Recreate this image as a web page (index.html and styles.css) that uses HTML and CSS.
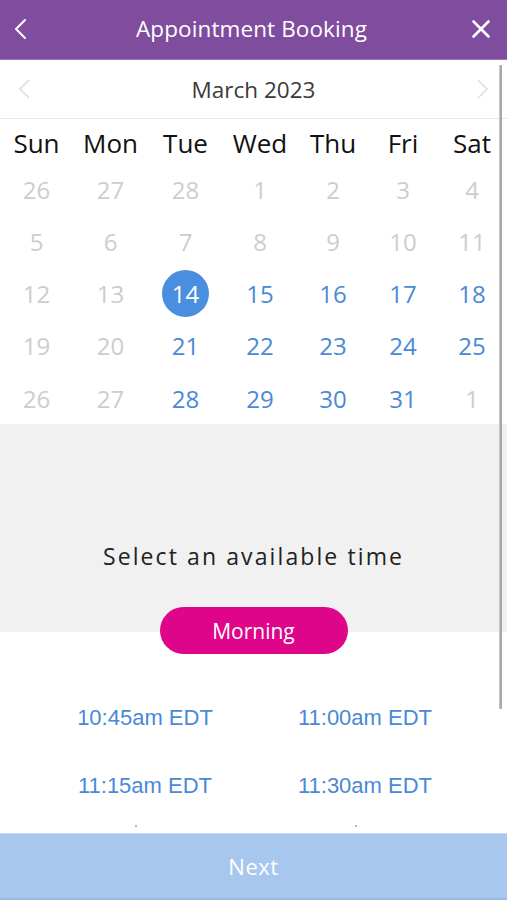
FILE: index.html
```html
<!DOCTYPE html>
<html lang="en">
<head>
<meta charset="utf-8">
<title>Appointment Booking</title>
<link rel="stylesheet" href="styles.css">
</head>
<body>
<div class="app">
  <header class="topbar">
    <button class="icon-btn back" aria-label="Back">
      <svg width="20" height="24" viewBox="0 0 20 24"><polyline points="13,3 4,12 13,21" fill="none" stroke="#fff" stroke-width="2" stroke-linecap="round" stroke-linejoin="round"/></svg>
    </button>
    <h1 class="title">Appointment Booking</h1>
    <button class="icon-btn close" aria-label="Close">
      <svg width="20" height="20" viewBox="0 0 20 20"><path d="M2.5 2.5 L17.5 17.5 M17.5 2.5 L2.5 17.5" fill="none" stroke="#fff" stroke-width="2.6" stroke-linecap="round"/></svg>
    </button>
  </header>

  <main class="content">
    <div class="month-row">
      <span class="chev">
        <svg width="14" height="22" viewBox="0 0 14 22"><polyline points="11,2 2,11 11,20" fill="none" stroke="#dcdcdc" stroke-width="1.5"/></svg>
      </span>
      <span class="month">March 2023</span>
      <span class="chev">
        <svg width="14" height="22" viewBox="0 0 14 22"><polyline points="3,2 12,11 3,20" fill="none" stroke="#dcdcdc" stroke-width="1.5"/></svg>
      </span>
    </div>

    <div class="calendar">
      <div class="wd">Sun</div><div class="wd">Mon</div><div class="wd">Tue</div><div class="wd">Wed</div><div class="wd">Thu</div><div class="wd">Fri</div><div class="wd">Sat</div>

      <div class="d off">26</div><div class="d off">27</div><div class="d off">28</div><div class="d off">1</div><div class="d off">2</div><div class="d off">3</div><div class="d off">4</div>
      <div class="d off">5</div><div class="d off">6</div><div class="d off">7</div><div class="d off">8</div><div class="d off">9</div><div class="d off">10</div><div class="d off">11</div>
      <div class="d off">12</div><div class="d off">13</div><div class="d sel"><span>14</span></div><div class="d on">15</div><div class="d on">16</div><div class="d on">17</div><div class="d on">18</div>
      <div class="d off">19</div><div class="d off">20</div><div class="d on">21</div><div class="d on">22</div><div class="d on">23</div><div class="d on">24</div><div class="d on">25</div>
      <div class="d off">26</div><div class="d off">27</div><div class="d on">28</div><div class="d on">29</div><div class="d on">30</div><div class="d on">31</div><div class="d off">1</div>
    </div>

    <section class="times-panel">
      <p class="prompt">Select an available time</p>
      <button class="period">Morning</button>
      <div class="slots">
        <span class="slot">10:45am EDT</span>
        <span class="slot">11:00am EDT</span>
        <span class="slot">11:15am EDT</span>
        <span class="slot">11:30am EDT</span>
      </div>
      <div class="peek">
        <span class="dot"></span>
        <span class="dot"></span>
      </div>
    </section>

    <div class="scrollbar"></div>
  </main>

  <footer class="footer">
    <button class="next">Next</button>
  </footer>
</div>
</body>
</html>
```

FILE: styles.css
```css
* { box-sizing: border-box; }

html, body {
  margin: 0;
  padding: 0;
  background: #fff;
}

body {
  font-family: "Open Sans", "Noto Sans", sans-serif;
}

.app {
  width: 507px;
  height: 900px;
  display: flex;
  flex-direction: column;
  overflow: hidden;
}

.topbar {
  flex: 0 0 60px;
  height: 60px;
  background: #7f4c9e;
  border-bottom: 1px solid #9a73b5;
  display: flex;
  align-items: center;
  justify-content: space-between;
  padding: 0 14px 2px 10px;
}

.icon-btn {
  background: none;
  border: 0;
  padding: 0;
  width: 24px;
  height: 24px;
  display: flex;
  align-items: center;
  justify-content: center;
}

.title {
  margin: 0;
  font-size: 22.5px;
  font-weight: 400;
  color: #fff;
  letter-spacing: 0.1px;
}

.content {
  flex: 1 1 auto;
  position: relative;
  overflow: hidden;
}

.month-row {
  height: 59px;
  border-bottom: 1px solid #e8e8e8;
  display: flex;
  align-items: center;
  justify-content: space-between;
  padding: 0 18px 0 18px;
}

.chev {
  display: flex;
  width: 14px;
  height: 22px;
}

.month {
  font-size: 22.5px;
  color: #3a3a3a;
}

.calendar {
  display: grid;
  grid-template-columns: 73px 75px 75px 74px 72px 68px 70px;
  grid-auto-rows: 52.25px;
  grid-template-rows: 44px;
}

.wd {
  height: 44px;
  padding-top: 5px;
  line-height: 38px;
  text-align: center;
  font-size: 26px;
  color: #111;
}

.d {
  display: flex;
  align-items: center;
  justify-content: center;
  font-size: 24px;
}

.d.off { color: #cdcdcd; }
.d.on { color: #4a89d6; }

.d.sel span {
  width: 47px;
  height: 47px;
  border-radius: 50%;
  background: #4a8edf;
  color: #fff;
  display: flex;
  align-items: center;
  justify-content: center;
}

.times-panel {
  background: linear-gradient(to bottom, #f1f1f1 0, #f1f1f1 208px, #fff 208px);
  padding-top: 117px;
  display: flex;
  flex-direction: column;
  align-items: center;
}

.prompt {
  margin: 0;
  font-size: 23px;
  line-height: 30px;
  letter-spacing: 2.1px;
  color: #222;
}

.period {
  margin-top: 36px;
  width: 188px;
  height: 47px;
  border: 0;
  border-radius: 24px;
  background: #df058a;
  color: #fff;
  font-family: "Open Sans", "Noto Sans", sans-serif;
  font-size: 21px;
  padding: 0;
}

.slots {
  margin-top: 30px;
  display: grid;
  grid-template-columns: 220px 220px;
  grid-auto-rows: 68px;
  justify-content: start;
  width: 100%;
  padding-left: 35px;
}

.slot {
  display: flex;
  align-items: center;
  justify-content: center;
  font-family: "Liberation Sans", Arial, sans-serif;
  font-size: 22px;
  color: #4a89d6;
}

.peek {
  width: 100%;
  display: grid;
  grid-template-columns: 220px 220px;
  padding-left: 35px;
  margin-top: 5px;
}

.dot {
  justify-self: center;
  width: 2px;
  height: 2px;
  background: #9fb9dc;
  margin-left: -18px;
}

.scrollbar {
  position: absolute;
  top: 5px;
  right: 5px;
  width: 3px;
  height: 644px;
  background: #a9a9a9;
  border-left: 1px solid #c8c8c8;
  border-radius: 1px;
}

.footer {
  flex: 0 0 67px;
  height: 67px;
  background: #a7c7ee;
  border-top: 1px solid #c4d9f4;
  border-bottom: 2px solid #9bb9e2;
}

.next {
  width: 100%;
  height: 100%;
  border: 0;
  background: none;
  color: #fff;
  font-family: "Open Sans", "Noto Sans", sans-serif;
  font-size: 22px;
  letter-spacing: 0.5px;
  padding: 0;
}
```
